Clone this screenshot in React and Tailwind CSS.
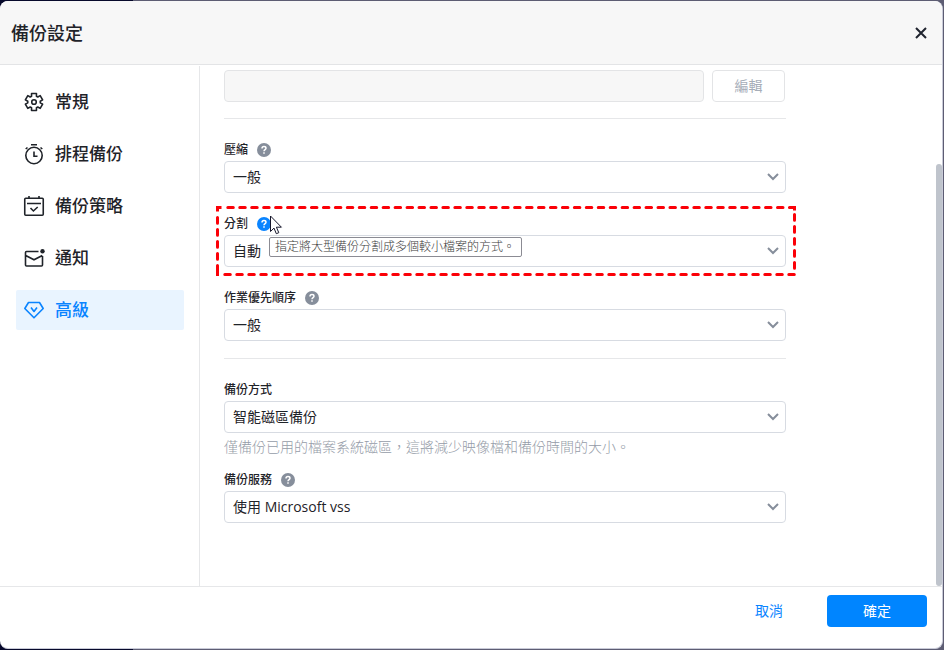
import React from "react";

const svgProps = {
  width: 22,
  height: 22,
  viewBox: "0 0 22 22",
  fill: "none",
  stroke: "currentColor",
  strokeWidth: 1.6,
  "aria-hidden": true,
  className: "shrink-0",
};

// Outline of a cog with six teeth: each tooth has two outer corners and two root corners.
const GEAR_POINTS = [0, 60, 120, 180, 240, 300]
  .flatMap((a) => [
    [a - 23, 6.3],
    [a - 16, 8.9],
    [a + 16, 8.9],
    [a + 23, 6.3],
  ])
  .map(([deg, r]) => {
    const t = ((deg - 90) * Math.PI) / 180;
    return `${(11 + r * Math.cos(t)).toFixed(2)},${(11 + r * Math.sin(t)).toFixed(2)}`;
  })
  .join(" ");

function GearIcon() {
  return (
    <svg {...svgProps} strokeLinejoin="round">
      <polygon points={GEAR_POINTS} />
      <circle cx="11" cy="11" r="2.3" />
    </svg>
  );
}

function TimerIcon() {
  return (
    <svg {...svgProps}>
      <circle cx="11" cy="12.5" r="8.2" />
      <path d="M8 1.700h6M11 8.500v4.800h3.500M2.700 6l1.800-1.500M19.300 6l-1.800-1.500" />
    </svg>
  );
}

function CalendarIcon() {
  return (
    <svg {...svgProps}>
      <rect x="1.75" y="3.2" width="18.5" height="17" rx="1" />
      <path d="M6 1v3M16 1v3M4 8.500h14M7.500 13l2.900 3 4.300-4" />
    </svg>
  );
}

function MailIcon() {
  return (
    <svg {...svgProps}>
      <path d="M15.500 4.500H3.500a1 1 0 0 0-1 1V18a1 1 0 0 0 1 1h15a1 1 0 0 0 1-1V9M2.700 8.500l8.300 4.300 8.300-4.300" />
      <circle cx="19.500" cy="4.300" r="2.200" fill="currentColor" stroke="none" />
    </svg>
  );
}

function DiamondIcon() {
  return (
    <svg {...svgProps} strokeLinejoin="round">
      <path d="M5.500 3.500h11L20.200 9.500 11 18.800 1.800 9.500z" />
      <path d="M8 8.500l3 4 3-4" />
    </svg>
  );
}

const NAV = [
  { text: "常規", Icon: GearIcon },
  { text: "排程備份", Icon: TimerIcon },
  { text: "備份策略", Icon: CalendarIcon },
  { text: "通知", Icon: MailIcon },
  { text: "高級", Icon: DiamondIcon, active: true },
];

function Help({ active }) {
  return (
    <button
      type="button"
      aria-label="說明"
      className={`flex size-[14px] items-center justify-center rounded-full text-white ${active ? "bg-[#0a84ff]" : "bg-[#868e9b]"}`}
    >
      <svg width="14" height="14" viewBox="0 0 14 14" fill="none" stroke="currentColor" strokeWidth="1.5" aria-hidden="true">
        <path d="M5 5.600C5 4.300 5.900 3.600 7 3.600s2 .7 2 1.700C9 6.600 7 6.700 7 8.300" />
        <path d="M7 9.300v1.500" />
      </svg>
    </button>
  );
}

function Field({ id, label, value, help, helpActive, children }) {
  return (
    <div className="relative">
      <div className="flex h-6 items-center gap-[9px] pt-[2px]">
        <label htmlFor={id} className="text-xs font-medium">
          {label}
        </label>
        {help && <Help active={helpActive} />}
      </div>
      <div className="relative">
        <select
          id={id}
          className="block h-8 w-full appearance-none rounded border border-[#d7dbe2] bg-white pr-8 pl-2 text-sm"
        >
          <option>{value}</option>
        </select>
        <svg
          width="12"
          height="8"
          viewBox="0 0 12 8"
          fill="none"
          stroke="#868e9b"
          strokeWidth="2"
          aria-hidden="true"
          className="pointer-events-none absolute top-3 right-[7px]"
        >
          <path d="M1 1l5 5 5-5" />
        </svg>
      </div>
      {children}
    </div>
  );
}

function Highlight() {
  return (
    <svg
      viewBox="0 0 580 70"
      fill="none"
      stroke="#fb0007"
      strokeWidth="3"
      strokeLinecap="round"
      aria-hidden="true"
      className="pointer-events-none absolute -top-[5px] -left-2 h-[70px] w-[580px] max-w-none"
    >
      <path d="M1.500 1.500H4M1.500 1.500V4M578.500 1.500V3M1.500 68.500V66" strokeLinecap="square" />
      <path d="M11.800 1.500H579" strokeDasharray="5.500 6.450" />
      <path d="M8.800 68.500H579" strokeDasharray="5.500 6.500" />
      <path d="M1.500 11.500V68" strokeDasharray="5.700 6.300" />
      <path d="M578.500 8.500V66" strokeDasharray="5.700 6.300" />
    </svg>
  );
}

export default function App() {
  return (
    <div className="flex min-h-screen flex-col bg-[linear-gradient(to_right,#07092b_133px,#5d5d73_133px)] pt-px pr-px pb-px font-['Open_Sans','Noto_Sans_CJK_TC',sans-serif] text-[#1f2329]">
      <div className="flex flex-1 flex-col overflow-hidden rounded-lg border-r border-b border-[#c9cbd8] bg-white">
        <header className="flex h-16 items-center justify-between border-b border-[#e3e4e6] bg-[#f7f7f7] pr-[14px] pl-[11px]">
          <h1 className="text-lg font-medium">備份設定</h1>
          <button type="button" aria-label="關閉" className="p-px">
            <svg width="12" height="12" viewBox="0 0 12 12" stroke="#20242f" strokeWidth="2" aria-hidden="true">
              <path d="M1 1l10 10M11 1L1 11" />
            </svg>
          </button>
        </header>

        <div className="flex flex-1">
          <nav className="mt-px flex w-[200px] shrink-0 flex-col gap-3 border-r border-[#e6e7e9] py-4 pr-[15px] pl-4">
            {NAV.map(({ text, Icon, active }) => (
              <a
                key={text}
                href="#"
                className={`flex h-10 items-center gap-[10px] rounded-xs pl-[7px] text-[17px] font-medium ${active ? "bg-[#e9f4ff] text-[#0a84ff]" : ""}`}
              >
                <Icon />
                {text}
              </a>
            ))}
          </nav>

          <main className="min-w-0 flex-1 pr-4 pl-6">
            <form className="flex max-w-[562px] flex-col">
              <div className="mt-[5px] flex gap-2 pr-px">
                <input
                  disabled
                  aria-label="備註"
                  className="h-8 min-w-0 flex-1 rounded border border-[#e3e4e6] bg-[#f7f7f7] px-2 text-sm"
                />
                <button
                  type="button"
                  disabled
                  className="h-8 w-[73px] rounded border border-[#e3e4e6] text-sm text-[#a6adb8]"
                >
                  編輯
                </button>
              </div>
              <hr className="mt-4 mb-[18px] border-[#e6e7e9]" />
              <div className="flex flex-col gap-[18px]">
                <Field id="compress" label="壓縮" value="一般" help />
                <Field id="split" label="分割" value="自動" help helpActive>
                  <Highlight />
                  <div
                    role="tooltip"
                    className="absolute top-[26px] left-[45px] flex h-5 items-center rounded-xs border border-[#8b8b93] bg-white pr-[6px] pl-[5px] text-xs font-light whitespace-nowrap text-[#3a3a3a]"
                  >
                    指定將大型備份分割成多個較小檔案的方式。
                  </div>
                  <svg
                    width="13"
                    height="20"
                    viewBox="0 0 13 20"
                    fill="#fff"
                    stroke="#15152a"
                    aria-hidden="true"
                    className="absolute top-1 left-[46px]"
                  >
                    <path d="M.5 1v15.500l3.500-3.400 2.300 5.600 2.500-1-2.400-5.500h5z" />
                  </svg>
                </Field>
                <Field id="priority" label="作業優先順序" value="一般" help />
              </div>
              <hr className="mt-[17px] mb-[18px] border-[#e6e7e9]" />
              <Field id="method" label="備份方式" value="智能磁區備份" />
              <p className="mb-[6px] text-sm leading-7 font-light text-[#959ca8]">
                僅備份已用的檔案系統磁區，這將減少映像檔和備份時間的大小。
              </p>
              <Field id="service" label="備份服務" value="使用 Microsoft vss" help />
            </form>
          </main>

          <div className="flex w-[6px] flex-col pt-[99px]" aria-hidden="true">
            <div className="flex-1 rounded-full bg-[#bfc4cc]" />
          </div>
        </div>

        <footer className="flex h-[62px] items-start justify-end gap-[14px] border-t border-[#e6e7e9] pt-2 pr-[15px]">
          <button type="button" className="h-8 w-[88px] text-sm text-[#0a84ff]">
            取消
          </button>
          <button type="button" className="h-8 w-[100px] rounded bg-[#0085ff] text-sm text-white">
            確定
          </button>
        </footer>
      </div>
    </div>
  );
}
